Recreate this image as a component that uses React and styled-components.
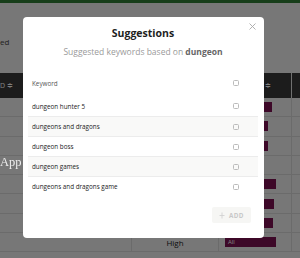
import React from 'react'
import styled, { createGlobalStyle } from 'styled-components'

const GlobalStyle = createGlobalStyle`
  body {
    margin: 0;
    background: #eeeeee;
    font-family: "Open Sans", "Noto Sans", sans-serif;
    overflow: hidden;
  }
`

const Page = styled.div`
  width: 300px;
  height: 258px;
  overflow: hidden;
`

const TopBar = styled.div`
  height: 3px;
  background: #2f7d34;
`

const PageHead = styled.div`
  height: 70px;
  padding-top: 33px;
  box-sizing: border-box;
  font-size: 8px;
  color: #444;
`

const Grid = styled.div`
  display: grid;
  grid-template-columns: 132px 87px 73px 1fr;
`

const HeadCell = styled.div`
  height: 25px;
  background: #383838;
  color: #fff;
  font-size: 7px;
  display: flex;
  align-items: center;
  justify-content: ${p => p.$right ? 'flex-end' : 'flex-start'};
  padding-right: ${p => p.$right ? '20px' : '0'};
  border-right: ${p => p.$line ? '1px solid #e0e0e0' : 'none'};
  box-sizing: border-box;
`

const Cell = styled.div`
  height: 19.3px;
  border-bottom: 1px solid #d6d6d6;
  border-right: ${p => p.$line ? '1px solid #d6d6d6' : 'none'};
  box-sizing: border-box;
  display: flex;
  align-items: center;
  justify-content: ${p => p.$center ? 'center' : 'flex-start'};
  font-size: 8px;
  color: #222;
`

const Bar = styled.div`
  height: 10px;
  margin-left: 6px;
  background: #7a1050;
  color: #fff;
  font-size: 6px;
  line-height: 10px;
  padding-left: 3px;
  box-sizing: border-box;
`

const DevLabel = styled.div`
  position: fixed;
  left: 0;
  top: 155px;
  z-index: 30;
  font-family: "Liberation Serif", serif;
  font-size: 12.5px;
  line-height: 15px;
  color: #eeeeee;
`

const Overlay = styled.div`
  position: fixed;
  inset: 0;
  z-index: 20;
  background: rgba(0, 0, 0, 0.5);
  display: flex;
  align-items: flex-start;
  padding: 17px 0 0 23px;
`

const Modal = styled.div`
  position: relative;
  width: 241px;
  height: 221px;
  background: #fff;
  border-radius: 4px;
  padding: 0 6px 0 5px;
  box-sizing: border-box;
  display: flex;
  flex-direction: column;
`

const Title = styled.h2`
  margin: 8px 0 0;
  font-size: 10.5px;
  line-height: 16px;
  font-weight: 700;
  color: #1e1e1e;
  text-align: center;
`

const Subtitle = styled.p`
  margin: 5px 0 0;
  font-size: 8.5px;
  line-height: 12px;
  color: #9a9a9a;
  text-align: center;

  b {
    color: #666;
    font-weight: 700;
  }
`

const CloseButton = styled.button`
  position: absolute;
  top: 5px;
  right: 7px;
  width: 9px;
  height: 9px;
  padding: 0;
  border: none;
  background: none;
  display: flex;
  align-items: center;
  justify-content: center;
`

const Table = styled.div`
  margin-top: 14px;
  display: flex;
  flex-direction: column;
`

const HeadRow = styled.div`
  height: 24px;
  padding: 0 19px 2px 4px;
  box-sizing: border-box;
  display: flex;
  align-items: center;
  justify-content: space-between;
  font-size: 6.3px;
  color: #555;
`

const Row = styled.div`
  height: 20px;
  padding: 0 19px 0 4px;
  box-sizing: border-box;
  display: flex;
  align-items: center;
  justify-content: space-between;
  font-size: 6.3px;
  color: #222;
  background: ${p => p.$striped ? '#f9f9f8' : '#fff'};
  border-top: ${p => p.$first ? 'none' : '1px solid #ececec'};
`

const Check = styled.span`
  width: 6px;
  height: 6px;
  border: 1px solid #bbb;
  border-radius: 1.5px;
  box-sizing: border-box;
`

const Actions = styled.div`
  margin-top: 11px;
  display: flex;
  justify-content: flex-end;
  padding-right: 7px;
`

const AddButton = styled.button`
  width: 39px;
  height: 16px;
  border: none;
  border-radius: 2px;
  background: #f6f6f4;
  color: #c8c8c8;
  font-family: "Open Sans", sans-serif;
  font-size: 6.3px;
  font-weight: 700;
  letter-spacing: 0.4px;
  display: flex;
  align-items: center;
  justify-content: center;
  gap: 4px;
  padding: 0;
`

const bgRows = [
  { level: '', bar: 47 },
  { level: '', bar: 43 },
  { level: '', bar: 43 },
  { level: '', bar: 0 },
  { level: '', bar: 51 },
  { level: '', bar: 49 },
  { level: '', bar: 48 },
  { level: 'High', bar: 51, label: 'All' },
]

const suggestions = [
  'dungeon hunter 5',
  'dungeons and dragons',
  'dungeon boss',
  'dungeon games',
  'dungeons and dragons game',
]

export default function App() {
  return (
    <>
      <GlobalStyle />
      <Page>
        <TopBar />
        <PageHead>ed</PageHead>
        <Grid>
          <HeadCell>D ≑</HeadCell>
          <HeadCell />
          <HeadCell $right $line>Level ≑</HeadCell>
          <HeadCell />
          {bgRows.map((r, i) => (
            <React.Fragment key={i}>
              <Cell $line />
              <Cell $line $center>{r.level}</Cell>
              <Cell $line>
                {r.bar > 0 && <Bar style={{ width: r.bar }}>{r.label}</Bar>}
              </Cell>
              <Cell />
            </React.Fragment>
          ))}
        </Grid>
      </Page>

      <Overlay>
        <Modal>
          <CloseButton aria-label="close">
            <svg width="7" height="7" viewBox="0 0 7 7">
              <path d="M0.5 0.5 L6.5 6.5 M6.5 0.5 L0.5 6.5" stroke="#a8a8a8" strokeWidth="0.9" />
            </svg>
          </CloseButton>
          <Title>Suggestions</Title>
          <Subtitle>Suggested keywords based on <b>dungeon</b></Subtitle>
          <Table>
            <HeadRow>
              <span>Keyword</span>
              <Check />
            </HeadRow>
            {suggestions.map((s, i) => (
              <Row key={s} $first={i === 0} $striped={i % 2 === 1}>
                <span>{s}</span>
                <Check />
              </Row>
            ))}
          </Table>
          <Actions>
            <AddButton disabled>
              <svg width="6" height="7" viewBox="0 0 6 7">
                <path d="M3 0.5 V6.5 M0.5 3.5 H5.5" stroke="#cfcfcf" strokeWidth="0.8" />
              </svg>
              ADD
            </AddButton>
          </Actions>
        </Modal>
      </Overlay>
      <DevLabel>App</DevLabel>
    </>
  )
}
